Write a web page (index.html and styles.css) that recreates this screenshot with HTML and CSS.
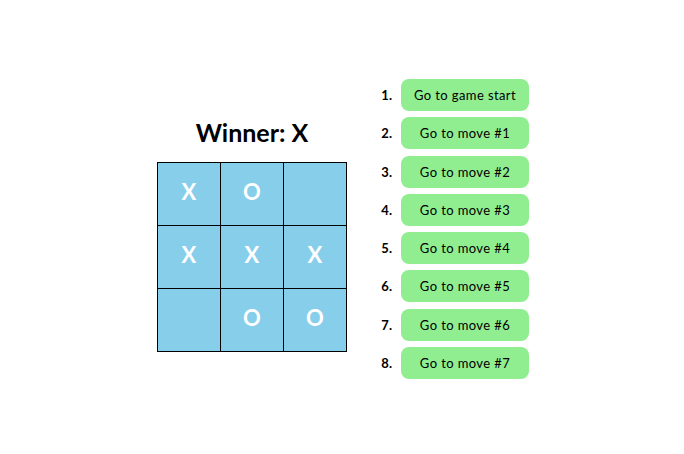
FILE: index.html
```html
<!DOCTYPE html>
<html>
<head>
<meta charset="utf-8">
<link rel="stylesheet" href="styles.css">
</head>
<body>
<div class="game">
  <div class="game-board">
    <div class="status">Winner: X</div>
    <div class="board">
      <button class="square">X</button>
      <button class="square">O</button>
      <button class="square"></button>
      <button class="square">X</button>
      <button class="square">X</button>
      <button class="square">X</button>
      <button class="square"></button>
      <button class="square">O</button>
      <button class="square">O</button>
    </div>
  </div>
  <ol class="game-info">
    <li><button class="move">Go to game start</button></li>
    <li><button class="move">Go to move #1</button></li>
    <li><button class="move">Go to move #2</button></li>
    <li><button class="move">Go to move #3</button></li>
    <li><button class="move">Go to move #4</button></li>
    <li><button class="move">Go to move #5</button></li>
    <li><button class="move">Go to move #6</button></li>
    <li><button class="move">Go to move #7</button></li>
  </ol>
</div>
</body>
</html>
```
FILE: styles.css
```css
html, body {
  margin: 0;
  padding: 0;
  background: #fff;
}
body {
  font-family: "Lato", "DejaVu Sans", sans-serif;
  color: #000;
}
.game {
  height: 454px;
  box-sizing: border-box;
  padding-left: 2px;
  display: flex;
  justify-content: center;
  align-items: center;
  gap: 14px;
}
.game-board {
  display: flex;
  flex-direction: column;
  align-items: center;
  margin-top: 14px;
}
.status {
  font-size: 25px;
  font-weight: 700;
  margin-bottom: 15px;
}
.board {
  display: grid;
  grid-template-columns: repeat(3, 62px);
  grid-template-rows: repeat(3, 62px);
  gap: 1px;
  background: #000;
  border: 1px solid #000;
}
.square {
  background: #87ceeb;
  border: none;
  padding: 0 0 4px;
  margin: 0;
  font-family: inherit;
  font-size: 22px;
  font-weight: 700;
  color: #fff;
}
.game-info {
  margin: 4px 0 0;
  padding: 0;
  list-style: none;
  counter-reset: item;
  display: flex;
  flex-direction: column;
  gap: 6.3px;
}
.game-info li {
  counter-increment: item;
  display: flex;
  align-items: center;
}
.game-info li::before {
  content: counter(item) ".";
  width: 31px;
  margin-right: 9px;
  text-align: right;
  font-size: 13px;
  font-weight: 700;
}
.move {
  display: block;
  width: 128px;
  height: 32px;
  border: none;
  border-radius: 8px;
  background: #90ee90;
  font-family: inherit;
  font-size: 13px;
  letter-spacing: 0.4px;
  font-weight: 400;
  color: #000;
  padding: 0;
}
```
